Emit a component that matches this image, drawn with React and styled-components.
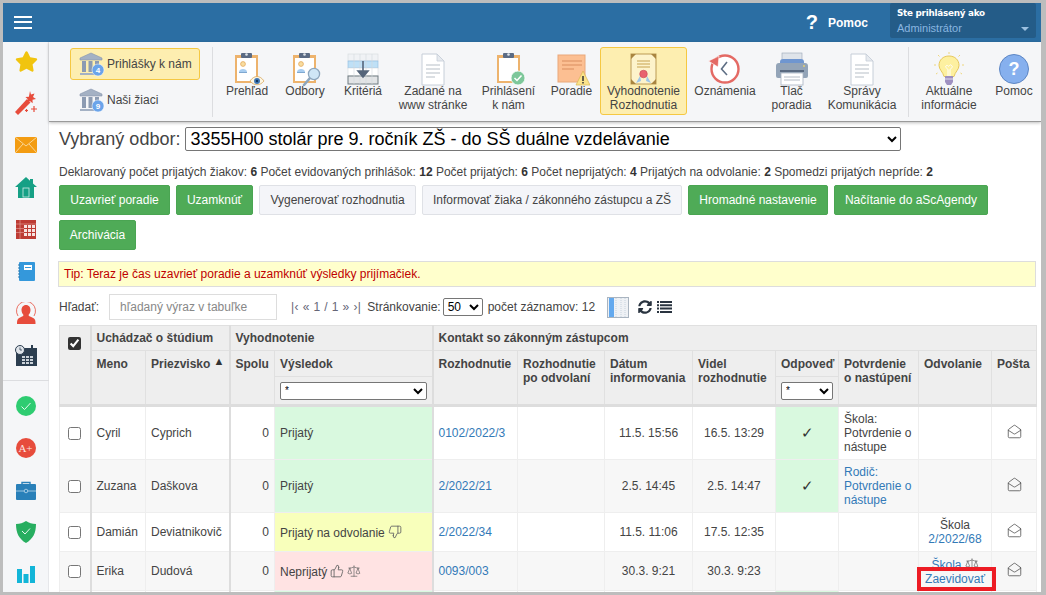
import React from "react"
import styled, { createGlobalStyle } from "styled-components"
import { FaStar, FaSyncAlt } from "react-icons/fa"
import { ThumbsUp, ThumbsDown, Scale, MailOpen } from "lucide-react"

const GlobalStyle = createGlobalStyle`
  html, body {
    margin: 0;
    padding: 0;
    height: 100%;
    overflow: hidden;
  }
  body {
    font-family: "Liberation Sans", Arial, sans-serif;
    font-size: 12px;
    color: #444;
  }
`

const Page = styled.div`
  width: 1046px;
  height: 595px;
  box-sizing: border-box;
  padding: 3px 5px 3px 3px;
  background: #bdbdbd;
`

const Shell = styled.div`
  width: 100%;
  height: 100%;
  background: #fff;
  display: flex;
  flex-direction: column;
  overflow: hidden;
`

const TopBar = styled.header`
  flex: none;
  height: 39px;
  background: #2b6ea3;
  display: flex;
  align-items: center;
  padding-left: 11px;
  color: #fff;
`

const Burger = styled.div`
  width: 18px;
  height: 13px;
  margin-top: -1px;
  border-top: 2px solid #fff;
  border-bottom: 2px solid #fff;
  box-sizing: border-box;
  position: relative;
  &::after {
    content: "";
    position: absolute;
    left: 0;
    right: 0;
    top: 3.5px;
    height: 2px;
    background: #fff;
  }
`

const HelpMark = styled.span`
  margin-left: auto;
  font-size: 20px;
  font-weight: bold;
`

const HelpLabel = styled.span`
  margin-left: 10px;
  margin-right: 22px;
  font-size: 12px;
  font-weight: bold;
`

const UserBox = styled.div`
  width: 146px;
  height: 35px;
  align-self: flex-start;
  margin-right: 5px;
  box-sizing: border-box;
  padding: 4px 7px 0;
  background: #245c88;
  border-radius: 2px;
  position: relative;
  &::after {
    content: "";
    position: absolute;
    right: 7px;
    top: 24px;
    border: 4px solid transparent;
    border-top: 4px solid #9cc0e0;
  }
`

const UserTitle = styled.div`
  font-size: 8.8px;
  font-weight: bold;
  font-family: "DejaVu Sans", sans-serif;
  letter-spacing: -0.25px;
  line-height: 13px;
`

const UserName = styled.div`
  font-size: 11px;
  color: #8ab6e0;
  line-height: 15px;
  margin-top: 1px;
`

const Body = styled.div`
  flex: 1;
  min-height: 0;
  display: flex;
`

const Sidebar = styled.nav`
  flex: none;
  width: 46px;
  background: #f5f6f8;
  display: flex;
  flex-direction: column;
  align-items: center;
  padding-top: 7px;
  box-shadow: inset -1px 0 0 #e6e7ea;
`

const SideIcon = styled.div`
  flex: none;
  height: 24px;
  width: 100%;
  margin-bottom: 18px;
  display: flex;
  align-items: center;
  justify-content: center;
`

const SideDivider = styled.div`
  align-self: stretch;
  flex: none;
  height: 1px;
  margin: -5px 0 13px;
  background: #dcdde0;
`

const Main = styled.main`
  flex: 1;
  min-width: 0;
  display: flex;
  flex-direction: column;
`

const Toolbar = styled.div`
  flex: none;
  height: 80px;
  box-sizing: border-box;
  padding-top: 5px;
  background: #f5f6f8;
  border-bottom: 1px solid #9a9a9a;
  box-shadow: 0 1px 3px rgba(0, 0, 0, 0.25);
  display: flex;
  align-items: flex-start;
  position: relative;
`

const ModuleGroup = styled.div`
  flex: none;
  width: 130px;
  margin: 1px 12px 0 21px;
  display: flex;
  flex-direction: column;
  gap: 4px;
`

const ModuleButton = styled.div`
  height: 32px;
  box-sizing: border-box;
  display: flex;
  align-items: center;
  gap: 2px;
  padding-left: 8px;
  font-size: 12px;
  white-space: nowrap;
  border: 1px solid ${(p) => (p.$active ? "#f5c842" : "transparent")};
  background: ${(p) => (p.$active ? "#fdeeb0" : "transparent")};
  border-radius: 3px;
`

const ToolDivider = styled.div`
  flex: none;
  width: 1px;
  height: 70px;
  background: #dcdde0;
`

const ToolGroup = styled.div`
  flex: none;
  display: flex;
  padding: 0 4px 0 5px;
`

const Tool = styled.div`
  flex: none;
  width: ${(p) => p.$w}px;
  height: 68px;
  box-sizing: border-box;
  padding-top: 4px;
  display: flex;
  flex-direction: column;
  align-items: center;
  text-align: center;
  font-size: 12px;
  line-height: 14px;
  white-space: nowrap;
  border: 1px solid ${(p) => (p.$active ? "#f5c842" : "transparent")};
  background: ${(p) => (p.$active ? "#fdeeb0" : "transparent")};
  border-radius: 3px;
  svg {
    flex: none;
    margin-bottom: -2px;
  }
`

const Content = styled.div`
  flex: 1;
  min-height: 0;
  padding: 5px 5px 0 10px;
`

const FieldRow = styled.div`
  display: flex;
  align-items: center;
  gap: 5px;
  font-size: 18px;
  height: 24px;
`

const BigSelect = styled.select`
  width: 716px;
  height: 24px;
  font-family: "Liberation Sans", Arial, sans-serif;
  font-size: 18px;
  color: #000;
  background: #fff;
  border: 1px solid #767676;
  border-radius: 2px;
  padding: 0;
`

const Stats = styled.div`
  margin-top: 14px;
  line-height: 14px;
  font-size: 12px;
  b {
    color: #333;
  }
`

const Actions = styled.div`
  display: flex;
  flex-wrap: wrap;
  gap: 5px 6px;
  margin-top: 6px;
`

const ActionButton = styled.div`
  width: ${(p) => p.$w}px;
  height: 30px;
  box-sizing: border-box;
  display: flex;
  align-items: center;
  justify-content: center;
  font-size: 12px;
  white-space: nowrap;
  border-radius: 2px;
  border: 1px solid ${(p) => (p.$plain ? "#dfe1e6" : "#4aa552")};
  background: ${(p) => (p.$plain ? "#f4f5f9" : "#4fab57")};
  color: ${(p) => (p.$plain ? "#444" : "#fff")};
`

const Tip = styled.div`
  margin: 11px 0 0 -1px;
  height: 26px;
  box-sizing: border-box;
  padding-left: 5px;
  display: flex;
  align-items: center;
  background: #ffffcc;
  border: 1px solid #ddd;
  color: #c00000;
  font-size: 12px;
`

const SearchRow = styled.div`
  display: flex;
  align-items: center;
  height: 26px;
  margin-top: 7px;
  font-size: 12px;
`

const SearchInput = styled.input`
  width: 168px;
  height: 26px;
  box-sizing: border-box;
  margin-left: 10px;
  padding: 0 10px;
  border: 1px solid #ddd;
  font-family: inherit;
  font-size: 12px;
  &::placeholder {
    color: #888;
  }
`

const Pager = styled.span`
  margin-left: 14px;
`

const PagerLinks = styled.span`
  color: #667;
  margin-right: 6px;
  letter-spacing: 0.4px;
`

const PageSelect = styled.select`
  width: 40px;
  height: 18px;
  margin: 0 5px 0 2px;
  font-family: inherit;
  font-size: 12px;
  color: #000;
  background: #fff;
  border: 1px solid #767676;
  border-radius: 2px;
  padding: 0;
`

const RowTools = styled.span`
  display: flex;
  align-items: center;
  margin-left: 12px;
  gap: 9px;
  color: #2a3440;
`

const SyncIcon = styled(FaSyncAlt)`
  margin-right: -4px;
`

const Grid = styled.table`
  width: 977px;
  margin-top: 5px;
  table-layout: fixed;
  border-collapse: collapse;
  font-size: 12px;
`

const Head = styled.th`
  background: #eee;
  border: 1px solid #e0e0e0;
  border-left: ${(p) => (p.$thick ? "2px solid #ddd" : "1px solid #e0e0e0")};
  border-bottom: ${(p) => (p.$last ? "3px solid #ddd" : "1px solid #e0e0e0")};
  box-sizing: border-box;
  height: ${(p) => p.$h || 26}px;
  padding: ${(p) => (p.$top ? "6px 5px 0" : "0 5px")};
  text-align: left;
  vertical-align: ${(p) => (p.$top ? "top" : "middle")};
  font-weight: bold;
  line-height: 14px;
  color: #444;
  position: relative;
`

const CheckHead = styled(Head)`
  padding: 11px 0 0;
  vertical-align: top;
`

const Cell = styled.td`
  box-sizing: border-box;
  padding: 0 5px;
  border: 1px solid #eee;
  border-left: ${(p) => (p.$thick ? "2px solid #ddd" : "1px solid #eee")};
  text-align: ${(p) => p.$align || "left"};
  background: ${(p) => p.$bg || "transparent"};
  line-height: 14px;
  position: relative;
`

const Row = styled.tr`
  height: ${(p) => p.$h}px;
  background: ${(p) => (p.$alt ? "#f7f7f7" : "#fff")};
`

const Check = styled.input`
  display: block;
  width: 13px;
  height: 13px;
  margin: 0 auto;
  accent-color: #333;
`

const FilterSelect = styled.select`
  width: 100%;
  height: 18px;
  box-sizing: border-box;
  font-family: inherit;
  font-size: 10px;
  color: #000;
  background: #fff;
  border: 1px solid #767676;
  border-radius: 2px;
  padding: 0;
  display: block;
`

const SortMark = styled.span`
  position: absolute;
  right: 4px;
  top: 3px;
  font-size: 11px;
  color: #333;
`

const Link = styled.span`
  color: #337ab7;
`

const Tick = styled.span`
  font-size: 15px;
  color: #333;
`

const InlineIcon = styled.span`
  display: inline-flex;
  vertical-align: -2px;
  margin-left: 3px;
  color: #666;
`

const MarkedBox = styled.span`
  position: absolute;
  left: -2px;
  top: 15px;
  width: 79px;
  height: 24px;
  box-sizing: border-box;
  border: 4px solid #ed1c24;
  pointer-events: none;
`

const Bank = ({ n }) => (
  <svg width="26" height="26" viewBox="0 0 26 26">
    <path d="M12 2 1 7v2h22V7z" fill="#a4b1c4" stroke="#8796ad" strokeWidth=".6" />
    <path d="M3 10h4v11H3zM9.500 10h4v11h-4zM16 10h4v11h-4z" fill="#8c9bb2" />
    <path d="M1 22h22v2H1z" fill="#a4b1c4" />
    <circle cx="19" cy="19" r="6" fill="#6ba4ea" stroke="#fff" strokeWidth=".5" />
    <text x="19" y="22" textAnchor="middle" fontSize="8" fontWeight="bold" fill="#fff" fontFamily="Liberation Sans">{n}</text>
  </svg>
)

const ClipBase = ({ person }) => (
  <>
    <rect x="6" y="3" width="23" height="28" fill="#edb36d" />
    <rect x="8" y="6" width="19" height="23" fill="#fff" />
    <rect x="12" y="1" width="11" height="5" rx="1" fill="#5b6b84" />
    <circle cx="17.500" cy="2.500" r="1.300" fill="#dfe4ea" />
    {person && (
      <>
        <circle cx="14" cy="12" r="2.400" fill="#f8dda0" stroke="#e4aa5c" strokeWidth=".8" />
        <path d="M10 20c0-4 8-4 8 0z" fill="#a8cdf0" />
        <rect x="10" y="20" width="8" height="1" fill="#7fa8d0" />
      </>
    )}
  </>
)

const EyeBoard = () => (
  <svg width="36" height="34" viewBox="0 0 36 34">
    <ClipBase person />
    <path d="M21 29c4-6 10-6 14 0-4 5-10 5-14 0z" fill="#fdf6e3" stroke="#d8a860" strokeWidth=".8" />
    <circle cx="28" cy="29" r="3" fill="#3f77b5" />
    <circle cx="28" cy="29" r="1.200" fill="#14365e" />
  </svg>
)

const SearchBoard = () => (
  <svg width="36" height="34" viewBox="0 0 36 34">
    <ClipBase person />
    <path d="M23 26 17 33" stroke="#8da6bd" strokeWidth="2.600" strokeLinecap="round" />
    <circle cx="27" cy="22" r="5.600" fill="#cfe6f6" stroke="#8da6bd" strokeWidth="1.300" />
  </svg>
)

const CriteriaIcon = () => (
  <svg width="36" height="34" viewBox="0 0 36 34">
    <rect x="3" y="2" width="30" height="7" fill="#f0f2f5" stroke="#d5d9de" strokeWidth=".6" />
    <rect x="3" y="9" width="30" height="7" fill="#bfe0f6" stroke="#8dbbe0" strokeWidth=".6" />
    <rect x="3" y="16" width="30" height="8" fill="#fff" stroke="#d5d9de" strokeWidth=".6" />
    <rect x="3" y="24" width="30" height="8" fill="#e2e4e6" stroke="#6f7a80" strokeWidth="1" />
    <path d="M9 2v30M15 2v30M21 2v30M27 2v30" stroke="#d5d9de" strokeWidth=".6" />
    <path d="M18 9v13M13 19l5 6 5-6z" stroke="#55657a" strokeWidth="1.600" fill="#55657a" />
  </svg>
)

const DocIcon = () => (
  <svg width="36" height="34" viewBox="0 0 36 34">
    <path d="M7 2h15l7 7v24H7z" fill="#fff" stroke="#c6ced8" strokeWidth="1" />
    <path d="M22 2v7h7z" fill="#e6eaef" stroke="#c6ced8" strokeWidth=".8" />
    <path d="M11 13h14M11 17h14M11 21h14M11 25h9" stroke="#b8bfc8" strokeWidth="1.200" />
  </svg>
)

const DoneBoard = () => (
  <svg width="36" height="34" viewBox="0 0 36 34">
    <ClipBase />
    <circle cx="27" cy="26" r="7" fill="#7dc79a" stroke="#fff" strokeWidth=".8" />
    <path d="m23.500 26 2.500 2.500 4.500-5" fill="none" stroke="#fff" strokeWidth="1.500" />
  </svg>
)

const RankIcon = () => (
  <svg width="36" height="34" viewBox="0 0 36 34">
    <rect x="4" y="3" width="27" height="27" fill="#fcbf92" stroke="#eaa87a" />
    <path d="M8 9h20M8 13h20M8 17h12" stroke="#d98d5e" strokeWidth="1.200" />
    <path d="M29 19 36 33H22z" fill="#fbe38a" stroke="#d8b450" strokeWidth=".7" />
    <path d="M29 24v5M29 30v1.500" stroke="#333" strokeWidth="1.500" />
  </svg>
)

const DecreeIcon = () => (
  <svg width="36" height="34" viewBox="0 0 36 34">
    <rect x="5" y="2" width="25" height="30" fill="#fdf3cb" stroke="#bb9a55" />
    <path d="M5 2h5l-5 5zM30 2h-5l5 5zM5 32h5l-5-5zM30 32h-5l5-5z" fill="#a98540" />
    <path d="M11 9h13M11 12h13M11 15h13" stroke="#c7a350" strokeWidth="1" />
    <path d="M14 24l-4 7 5-2zM21 24l4 7-5-2z" fill="#9fc6e8" />
    <circle cx="17.500" cy="22" r="3.800" fill="#e8636e" stroke="#c74753" strokeWidth=".6" />
  </svg>
)

const ClockIcon = () => (
  <svg width="36" height="34" viewBox="0 0 36 34">
    <circle cx="18" cy="17" r="13.500" fill="#fff" stroke="#e46a64" strokeWidth="2.400" />
    <path d="M20 10l-5.500 7 5.500 6" fill="none" stroke="#5f6f85" strokeWidth="1.600" />
    <path d="M1.500 9 12 4l-1 11z" fill="#e46a64" stroke="#fff" strokeWidth=".6" />
  </svg>
)

const PrinterIcon = () => (
  <svg width="36" height="34" viewBox="0 0 36 34">
    <rect x="8" y="1" width="20" height="12" fill="#dfe4ea" stroke="#9aa6b6" strokeWidth=".6" />
    <path d="M6 10a3 3 0 0 1 3-3h18a3 3 0 0 1 3 3v4H6z" fill="#6f96d0" />
    <path d="M2 14a3 3 0 0 1 3-3h26a3 3 0 0 1 3 3v10a2 2 0 0 1-2 2H4a2 2 0 0 1-2-2z" fill="#93a4b8" />
    <path d="M6 18h24v2H6z" fill="#5a6a80" />
    <rect x="7" y="21" width="22" height="12" fill="#fff" stroke="#a8b2c0" strokeWidth=".8" />
    <path d="M10 25h16M10 28h16" stroke="#b5bcc6" strokeWidth="1" />
    <circle cx="30" cy="14" r=".9" fill="#ecd26c" />
  </svg>
)

const BulbIcon = () => (
  <svg width="36" height="34" viewBox="0 0 36 34">
    <path d="M18 4c-6 0-10 4-10 9.500 0 4 4 6.500 5 11h10c1-4.500 5-7 5-11C28 8 24 4 18 4z" fill="#fdf0a0" stroke="#e6c85c" />
    <path d="M15 14c1.500-2 2 1 3 0s1.500-2 3 0-2 2-2 4v6M17 24v-6c0-2-3.500-2-2-4" fill="none" stroke="#fff" strokeWidth="1" />
    <path d="M14 24h8v6l-2 3h-4l-2-3z" fill="#9e90c0" />
    <path d="M14 27h8" stroke="#e0dcef" strokeWidth="1" />
    <path d="M18 0v2M7 3l1.500 1.500M29 3l-1.500 1.500M3 13h2M31 13h2M5 22l1.500-1M31 22l-1.500-1" stroke="#eed67c" strokeWidth="1" />
  </svg>
)

const HelpIcon = () => (
  <svg width="36" height="34" viewBox="0 0 36 34">
    <circle cx="18" cy="17" r="14.500" fill="#86b0ee" stroke="#5d86c4" />
    <text x="18" y="23" textAnchor="middle" fontSize="18" fontWeight="bold" fill="#fff" fontFamily="Liberation Sans">?</text>
  </svg>
)

const WandIcon = () => (
  <svg width="24" height="24" viewBox="0 0 24 24">
    <path d="M1 21 13 8l3.500 3.500L4 24z" fill="#e74c3c" />
    <path d="M16 0l1 3.500 3.500-1-1.500 3.500 3 2-3.500.8.200 3.500-2.800-2.300-3 1.800 1-3.500-2.500-2.300 3.500-.2z" fill="#e74c3c" />
    <path d="M20 15v6M17 18h6M12.500 18v3M11 19.500h3" stroke="#e74c3c" strokeWidth="1.200" />
  </svg>
)

const MailIcon = () => (
  <svg width="22" height="16" viewBox="0 0 22 16">
    <rect width="22" height="16" fill="#f39c12" />
    <path d="M0 0l11 9 11-9M0 16l8-9M22 16l-8-9" fill="none" stroke="#fbe3b8" strokeWidth=".8" />
  </svg>
)

const HomeIcon = () => (
  <svg width="22" height="21" viewBox="0 0 22 21">
    <path d="M11 0 0 10h3v11h16V10h3l-4-3.600V2h-3v1.700z" fill="#16a085" />
    <rect x="8" y="11" width="6" height="9" fill="#16a085" stroke="#d0ebe5" strokeWidth=".8" />
  </svg>
)

const GridIcon = () => (
  <svg width="20" height="19" viewBox="0 0 20 19">
    <rect width="20" height="19" fill="#bd3b34" />
    <path d="M8 5h3v3H8zM12 5h3v3h-3zM16 5h3v3h-3zM8 9h3v3H8zM12 9h3v3h-3zM16 9h3v3h-3zM8 13h3v3H8zM12 13h3v3h-3zM16 13h3v3h-3z" fill="#f7e3e1" />
    <path d="M0 4h20M4 0v19M0 8.500h8M0 12.500h8" stroke="#e7a5a0" strokeWidth=".6" />
  </svg>
)

const NotebookIcon = () => (
  <svg width="17" height="19" viewBox="0 0 17 19">
    <rect x="1" y="0" width="16" height="19" rx="1" fill="#3498db" />
    <rect x="6" y="3" width="8" height="5" fill="#fff" />
    <rect x="7" y="5" width="6" height="1" fill="#3498db" />
    <path d="M0 3h2M0 6h2M0 9h2M0 12h2M0 15h2" stroke="#2a78ad" strokeWidth="1" />
  </svg>
)

const PersonIcon = () => (
  <svg width="22" height="23" viewBox="0 0 22 23">
    <path d="M11 3c3 0 4.500 2.500 4.500 5 0 2-1 4-2 5 0 1.500 4 2 6 4 1 1 1 3 1 5H2c0-2 0-4 1-5 2-2 5.500-2.500 5.500-4-1-1-2-3-2-5 0-2.500 1.500-5 4.500-5z" fill="#e74c3c" />
    <path d="M3 14A9.500 9.500 0 1 1 19 14" fill="none" stroke="#e74c3c" strokeWidth=".8" />
  </svg>
)

const CalendarIcon = () => (
  <svg width="22" height="21" viewBox="0 0 22 21">
    <rect x="1" y="3" width="21" height="18" fill="#2c3e50" />
    <path d="M7 11h3v2H7zM11 11h3v2h-3zM15 11h3v2h-3zM7 14h3v2H7zM11 14h3v2h-3zM15 14h3v2h-3zM7 17h3v2H7zM11 17h3v2h-3zM15 17h3v2h-3z" fill="#cbd2d9" />
    <rect x="16" y="0" width="2" height="5" fill="#2c3e50" />
    <circle cx="5" cy="5" r="4.500" fill="#dfe4ea" stroke="#2c3e50" strokeWidth="1" />
    <path d="M5 2.500V5h2" fill="none" stroke="#2c3e50" strokeWidth=".8" />
  </svg>
)

const GreenBadge = () => (
  <svg width="20" height="20" viewBox="0 0 20 20">
    <circle cx="10" cy="10" r="10" fill="#2ecc71" />
    <path d="m5.500 10.500 3 3 6-6.500" fill="none" stroke="#e8f9ef" strokeWidth="1" />
  </svg>
)

const GradeBadge = () => (
  <svg width="20" height="20" viewBox="0 0 20 20">
    <circle cx="10" cy="10" r="10" fill="#e74c3c" />
    <text x="9.500" y="14" textAnchor="middle" fontSize="11" fill="#fbe4e1" fontFamily="Liberation Serif">A+</text>
  </svg>
)

const CaseIcon = () => (
  <svg width="20" height="19" viewBox="0 0 20 19">
    <path d="M6 4V1.500h8V4" fill="none" stroke="#2980b9" strokeWidth="1.400" />
    <rect y="3" width="20" height="16" rx="1" fill="#2980b9" />
    <path d="M0 10h20" stroke="#d0e4f2" strokeWidth=".7" />
    <circle cx="10" cy="10" r="1.800" fill="#2980b9" stroke="#d0e4f2" strokeWidth=".7" />
  </svg>
)

const ShieldIcon = () => (
  <svg width="20" height="22" viewBox="0 0 20 22">
    <path d="M10 0c3 2 6 3 10 3 0 9-3 15-10 19C3 18 0 12 0 3c4 0 7-1 10-3z" fill="#27ae60" />
    <path d="m6 10 3 3 5-5.500" fill="none" stroke="#e6f7ed" strokeWidth="1" />
  </svg>
)

const BarsIcon = () => (
  <svg width="18" height="17" viewBox="0 0 18 17">
    <path d="M0 3h5v14H0zM6.500 8h5v9h-5zM13 0h5v17h-5z" fill="#12b5d8" />
  </svg>
)

const ColumnsIcon = () => (
  <svg width="22" height="21" viewBox="0 0 22 21">
    <rect width="22" height="21" fill="#a9b4c0" />
    <rect x="1" y="1" width="20" height="19" fill="#eef1f5" />
    <rect x="2" y="1" width="5" height="19" fill="#63a9ee" />
    <path d="M9 1v19M14 1v19M18 1v19" stroke="#c8d3de" strokeWidth="1" strokeDasharray="1 1" />
  </svg>
)

const ListIcon = () => (
  <svg width="15" height="12" viewBox="0 0 15 12">
    <path d="M0 0h2v2H0zM0 3.300h2v2H0zM0 6.600h2v2H0zM0 9.900h2v2H0zM3 0h12v2H3zM3 3.300h12v2H3zM3 6.600h12v2H3zM3 9.900h12v2H3z" fill="#2a3440" />
  </svg>
)

const sideTop = [
  <FaStar size={23} color="#f1c40f" />,
  <WandIcon />,
  <MailIcon />,
  <HomeIcon />,
  <GridIcon />,
  <NotebookIcon />,
  <PersonIcon />,
  <CalendarIcon />,
]

const sideBottom = [<GreenBadge />, <GradeBadge />, <CaseIcon />, <ShieldIcon />, <BarsIcon />]

const GREEN = "#d9f9df"
const YELLOW = "#f8ffbb"
const RED = "#ffe3e3"

const Mail = () => <MailOpen size={15} strokeWidth={1.3} color="#555" />

export default function App() {
  return (
    <Page>
      <GlobalStyle />
      <Shell>
        <TopBar>
          <Burger />
          <HelpMark>?</HelpMark>
          <HelpLabel>Pomoc</HelpLabel>
          <UserBox>
            <UserTitle>Ste prihlásený ako</UserTitle>
            <UserName>Administrátor</UserName>
          </UserBox>
        </TopBar>
        <Body>
          <Sidebar>
            {sideTop.map((icon, i) => (
              <SideIcon key={i}>{icon}</SideIcon>
            ))}
            <SideDivider />
            {sideBottom.map((icon, i) => (
              <SideIcon key={i}>{icon}</SideIcon>
            ))}
          </Sidebar>
          <Main>
            <Toolbar>
              <ModuleGroup>
                <ModuleButton $active>
                  <Bank n="4" />
                  Prihlášky k nám
                </ModuleButton>
                <ModuleButton>
                  <Bank n="9" />
                  Naši žiaci
                </ModuleButton>
              </ModuleGroup>
              <ToolDivider />
              <ToolGroup>
                <Tool $w={58}><EyeBoard />Prehľad</Tool>
                <Tool $w={58}><SearchBoard />Odbory</Tool>
                <Tool $w={58}><CriteriaIcon />Kritériá</Tool>
                <Tool $w={82}><DocIcon />Zadané na<br />www stránke</Tool>
                <Tool $w={69}><DoneBoard />Prihlásení<br />k nám</Tool>
                <Tool $w={57}><RankIcon />Poradie</Tool>
                <Tool $w={87} $active><DecreeIcon />Vyhodnotenie<br />Rozhodnutia</Tool>
                <Tool $w={76}><ClockIcon />Oznámenia</Tool>
                <Tool $w={57}><PrinterIcon />Tlač<br />poradia</Tool>
                <Tool $w={84}><DocIcon />Správy<br />Komunikácia</Tool>
              </ToolGroup>
              <ToolDivider />
              <ToolGroup>
                <Tool $w={70}><BulbIcon />Aktuálne<br />informácie</Tool>
                <Tool $w={60}><HelpIcon />Pomoc</Tool>
              </ToolGroup>
            </Toolbar>
            <Content>
              <FieldRow>
                Vybraný odbor:
                <BigSelect>
                  <option>3355H00 stolár pre 9. ročník ZŠ - do SŠ duálne vzdelávanie</option>
                </BigSelect>
              </FieldRow>
              <Stats>
                Deklarovaný počet prijatých žiakov: <b>6</b> Počet evidovaných prihlášok: <b>12</b> Počet prijatých: <b>6</b> Počet neprijatých: <b>4</b> Prijatých na odvolanie: <b>2</b> Spomedzi prijatých nepríde: <b>2</b>
              </Stats>
              <Actions>
                <ActionButton $w={111}>Uzavrieť poradie</ActionButton>
                <ActionButton $w={77}>Uzamknúť</ActionButton>
                <ActionButton $w={157} $plain>Vygenerovať rozhodnutia</ActionButton>
                <ActionButton $w={260} $plain>Informovať žiaka / zákonného zástupcu a ZŠ</ActionButton>
                <ActionButton $w={140}>Hromadné nastavenie</ActionButton>
                <ActionButton $w={154}>Načítanie do aScAgendy</ActionButton>
                <ActionButton $w={77}>Archivácia</ActionButton>
              </Actions>
              <Tip>Tip: Teraz je čas uzavrieť poradie a uzamknúť výsledky prijímačiek.</Tip>
              <SearchRow>
                Hľadať:
                <SearchInput placeholder="hľadaný výraz v tabuľke" />
                <Pager><PagerLinks>|‹ « 1 / 1 » ›|</PagerLinks>Stránkovanie:</Pager>
                <PageSelect><option>50</option></PageSelect>
                počet záznamov: 12
                <RowTools>
                  <ColumnsIcon />
                  <SyncIcon size={14} />
                  <ListIcon />
                </RowTools>
              </SearchRow>
              <Grid>
                <colgroup>
                  {[31, 55, 84, 45, 158, 85, 87, 88, 83, 63, 80, 73, 45].map((w, i) => (
                    <col key={i} width={w} />
                  ))}
                </colgroup>
                <thead>
                  <tr>
                    <CheckHead rowSpan={3} $h={25} $last><Check type="checkbox" checked readOnly /></CheckHead>
                    <Head colSpan={2} $h={25} $thick>Uchádzač o štúdium</Head>
                    <Head colSpan={2} $h={25} $thick>Vyhodnotenie</Head>
                    <Head colSpan={8} $h={25} $thick>Kontakt so zákonným zástupcom</Head>
                  </tr>
                  <tr>
                    <Head rowSpan={2} $thick $top $last>Meno</Head>
                    <Head rowSpan={2} $top $last>Priezvisko<SortMark>▲</SortMark></Head>
                    <Head rowSpan={2} $thick $top $last>Spolu</Head>
                    <Head $top>Výsledok</Head>
                    <Head rowSpan={2} $thick $top $last>Rozhodnutie</Head>
                    <Head rowSpan={2} $top $last>Rozhodnutie po odvolaní</Head>
                    <Head rowSpan={2} $top $last>Dátum informovania</Head>
                    <Head rowSpan={2} $top $last>Videl rozhodnutie</Head>
                    <Head $top>Odpoveď</Head>
                    <Head rowSpan={2} $top $last>Potvrdenie o nastúpení</Head>
                    <Head rowSpan={2} $top $last>Odvolanie</Head>
                    <Head rowSpan={2} $top $last>Pošta</Head>
                  </tr>
                  <tr>
                    <Head $h={29} $last><FilterSelect><option>*</option></FilterSelect></Head>
                    <Head $h={29} $last><FilterSelect><option>*</option></FilterSelect></Head>
                  </tr>
                </thead>
                <tbody>
                  <Row $h={54}>
                    <Cell><Check type="checkbox" /></Cell>
                    <Cell $thick>Cyril</Cell>
                    <Cell>Cyprich</Cell>
                    <Cell $thick $align="right">0</Cell>
                    <Cell $bg={GREEN}>Prijatý</Cell>
                    <Cell $thick><Link>0102/2022/3</Link></Cell>
                    <Cell />
                    <Cell $align="center">11.5. 15:56</Cell>
                    <Cell $align="center">16.5. 13:29</Cell>
                    <Cell $bg={GREEN} $align="center"><Tick>✓</Tick></Cell>
                    <Cell>Škola: Potvrdenie o nástupe</Cell>
                    <Cell />
                    <Cell $align="center"><Mail /></Cell>
                  </Row>
                  <Row $h={53} $alt>
                    <Cell><Check type="checkbox" /></Cell>
                    <Cell $thick>Zuzana</Cell>
                    <Cell>Daškova</Cell>
                    <Cell $thick $align="right">0</Cell>
                    <Cell $bg={GREEN}>Prijatý</Cell>
                    <Cell $thick><Link>2/2022/21</Link></Cell>
                    <Cell />
                    <Cell $align="center">2.5. 14:45</Cell>
                    <Cell $align="center">2.5. 14:47</Cell>
                    <Cell $bg={GREEN} $align="center"><Tick>✓</Tick></Cell>
                    <Cell><Link>Rodič: Potvrdenie o nástupe</Link></Cell>
                    <Cell />
                    <Cell $align="center"><Mail /></Cell>
                  </Row>
                  <Row $h={39}>
                    <Cell><Check type="checkbox" /></Cell>
                    <Cell $thick>Damián</Cell>
                    <Cell>Deviatnikovič</Cell>
                    <Cell $thick $align="right">0</Cell>
                    <Cell $bg={YELLOW}>Prijatý na odvolanie<InlineIcon><ThumbsDown size={14} strokeWidth={1.5} /></InlineIcon></Cell>
                    <Cell $thick><Link>2/2022/34</Link></Cell>
                    <Cell />
                    <Cell $align="center">11.5. 11:06</Cell>
                    <Cell $align="center">17.5. 12:35</Cell>
                    <Cell />
                    <Cell />
                    <Cell $align="center">Škola<br /><Link>2/2022/68</Link></Cell>
                    <Cell $align="center"><Mail /></Cell>
                  </Row>
                  <Row $h={39} $alt>
                    <Cell><Check type="checkbox" /></Cell>
                    <Cell $thick>Erika</Cell>
                    <Cell>Dudová</Cell>
                    <Cell $thick $align="right">0</Cell>
                    <Cell $bg={RED}>Neprijatý<InlineIcon><ThumbsUp size={14} strokeWidth={1.5} /></InlineIcon><InlineIcon><Scale size={14} strokeWidth={1.2} /></InlineIcon></Cell>
                    <Cell $thick><Link>0093/003</Link></Cell>
                    <Cell />
                    <Cell $align="center">30.3. 9:21</Cell>
                    <Cell $align="center">30.3. 9:23</Cell>
                    <Cell />
                    <Cell />
                    <Cell $align="center">
                      <Link>Škola<InlineIcon><Scale size={14} strokeWidth={1.2} /></InlineIcon><br />Zaevidovať</Link>
                      <MarkedBox />
                    </Cell>
                    <Cell $align="center"><Mail /></Cell>
                  </Row>
                  <Row $h={20}>
                    <Cell />
                    <Cell $thick />
                    <Cell />
                    <Cell $thick />
                    <Cell $bg={GREEN} />
                    <Cell $thick />
                    <Cell />
                    <Cell />
                    <Cell />
                    <Cell $bg={GREEN} />
                    <Cell />
                    <Cell />
                    <Cell />
                  </Row>
                </tbody>
              </Grid>
            </Content>
          </Main>
        </Body>
      </Shell>
    </Page>
  )
}
